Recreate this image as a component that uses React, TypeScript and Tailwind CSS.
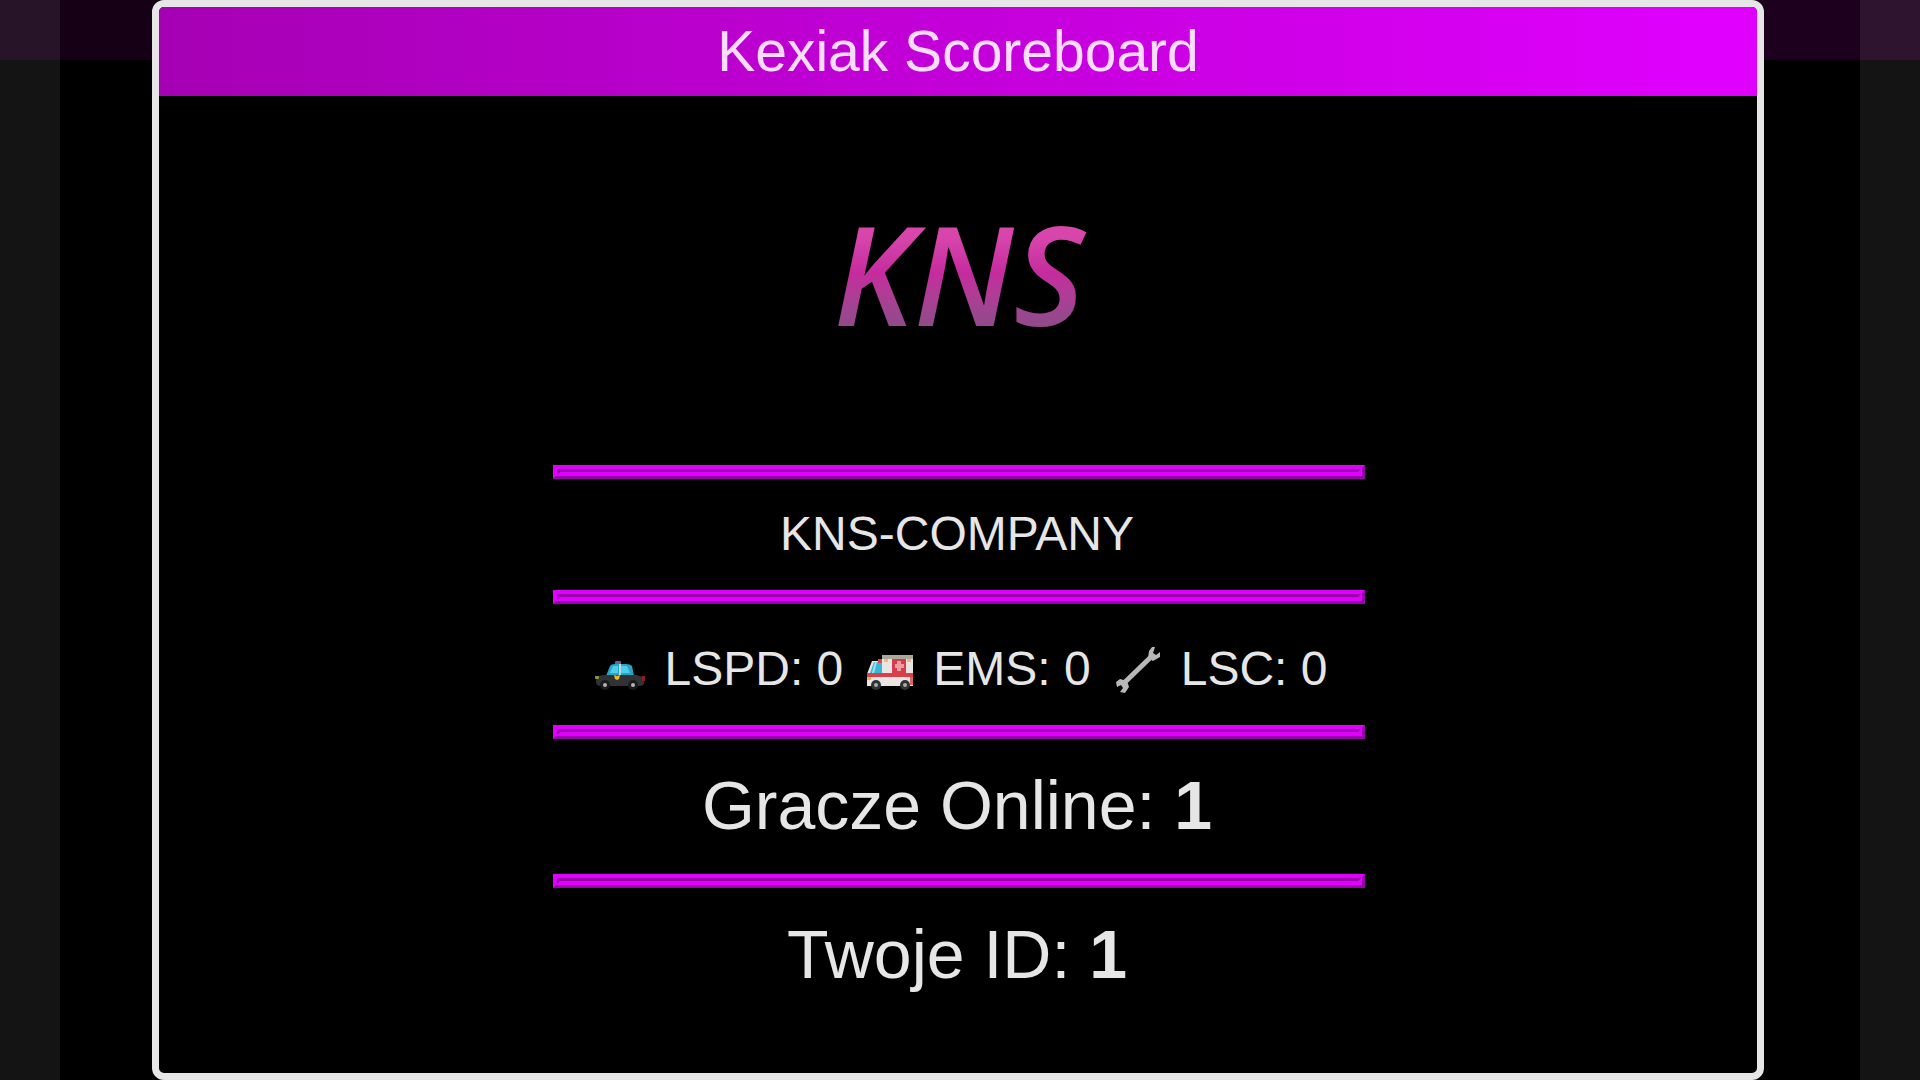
function PoliceCar() {
  return (
    <svg viewBox="0 0 50 32" className="mt-3 h-8 w-[50px]" aria-hidden="true">
      <rect x="20" y="2" width="6" height="4" rx="1" fill="#7d5a8c" />
      <path d="M11 17 15 7Q16 5 20 5H31Q35 5 37 7L39 17Z" fill="#27a5c4" />
      <path d="M15 14 18 7H23V14ZM26 7H32L35 14H26Z" fill="#4fcdea" />
      <path d="M24 5h2v12h-2z" fill="#b6d8df" />
      <path d="M1 19Q3 16 11 16H41Q48 17 49 20V25Q48 27 45 27H5Q1 26 1 23Z" fill="#303234" />
      <path d="M0 17h4v3H0z" fill="#7f8f3f" />
      <path d="M47 17h3v5h-3z" fill="#8b1d22" />
      <path d="m19 16 3 1 3-1-1 4-2 1-2-1Z" fill="#f5b922" />
      <circle cx="10" cy="26" r="5" fill="#191b1c" />
      <circle cx="38" cy="26" r="5" fill="#191b1c" />
      <circle cx="10" cy="26" r="2" fill="#b4b4b4" />
      <circle cx="38" cy="26" r="2" fill="#b4b4b4" />
    </svg>
  );
}

function Ambulance() {
  return (
    <svg viewBox="0 0 46 36" className="mt-2 h-9 w-[46px]" aria-hidden="true">
      <path d="M15 1H46V31H0V19L5 6H15Z" fill="#e8e5e2" />
      <path d="M15 0H46V4H15Z" fill="#aaa79d" />
      <path d="M3 18 7 7H15V18Z" fill="#35b7d8" />
      <path d="M8 7h2L7 18H5z" fill="#a6e1ee" />
      <path d="M11 4h4v4h-4z" fill="#d64852" />
      <path d="M17 4h4v3h-4zM40 4h4v3h-4z" fill="#efbd6b" />
      <path d="M25 4h14v14H25z" fill="#d43d4c" />
      <path d="M30 6h4v3h3v4h-3v3h-4v-3h-2V9h2z" fill="#ee9da1" />
      <path d="M0 18h46v4H0z" fill="#d93e4a" />
      <path d="M0 22h4v3H0z" fill="#f0b44e" />
      <path d="M43 22h3v8h-3z" fill="#d86767" />
      <circle cx="9" cy="30" r="5" fill="#303234" />
      <circle cx="38" cy="30" r="5" fill="#303234" />
      <circle cx="9" cy="30" r="2" fill="#aaa" />
      <circle cx="38" cy="30" r="2" fill="#aaa" />
    </svg>
  );
}

function Wrench() {
  return (
    <svg viewBox="0 0 46 48" className="h-12 w-[46px]" aria-hidden="true">
      <path d="M8 39 38 10" stroke="#b8b8b8" strokeWidth="5" />
      <path d="M37 2 34 6 33 13 38 16 45 12 45 7 41 10 38 8 40 2Z" fill="#b8b8b8" />
      <path d="M1 37 5 34 12 36 14 42 10 48 5 47 8 43 6 40 2 42Z" fill="#b8b8b8" />
    </svg>
  );
}

function Rule() {
  return <hr className="h-0 w-full border-[7px] border-[#e100ff] [border-style:ridge]" />;
}

const services = [
  { name: 'LSPD', count: 0, icon: <PoliceCar /> },
  { name: 'EMS', count: 0, icon: <Ambulance /> },
  { name: 'LSC', count: 0, icon: <Wrench /> },
];

export default function App() {
  return (
    <div className="relative flex h-screen bg-black pr-[156px] pl-[152px] font-['Liberation_Sans',Arial,sans-serif] text-[#e6e6e6]">
      {/* Dimmed page behind the panel */}
      <div className="absolute inset-x-0 top-0 h-[60px] bg-linear-to-r from-[#160016] to-[#1e001e]" />
      <div className="absolute inset-y-0 left-0 w-[60px] bg-white/8" />
      <div className="absolute inset-y-0 right-0 w-[60px] bg-white/8" />

      <main className="relative flex flex-1 flex-col overflow-hidden rounded-xl border-[7px] border-[#e6e6e6] bg-black">
        <header className="flex h-[89px] items-center justify-center bg-linear-to-r from-[#a600b4] to-[#e100ff] pb-0.5">
          <h1 className="text-[57px] leading-[64px] text-[#f9dcff]">Kexiak Scoreboard</h1>
        </header>

        <section className="mx-auto flex w-[51%] flex-col items-center pl-0.5 whitespace-nowrap">
          <div className="flex h-[369px] items-center pb-4">
            <span className="bg-linear-to-b from-[#d846ac] from-30% via-[#c52b9e] via-50% to-[#96488d] to-75% bg-clip-text px-2 font-['Open_Sans',sans-serif] text-[137px] leading-[184px] font-semibold text-transparent italic">
              KNS
            </span>
          </div>

          <Rule />
          <p className="flex h-[111px] items-center pr-1 pb-0.5 text-[48px] leading-[56px]">KNS-COMPANY</p>
          <Rule />
          <ul className="flex h-[121px] items-center gap-6 pt-2 pl-1 text-[48px] leading-[56px]">
            {services.map((service) => (
              <li key={service.name} className="flex items-center gap-5">
                {service.icon}
                <span>
                  {service.name}: {service.count}
                </span>
              </li>
            ))}
          </ul>
          <Rule />
          <p className="flex h-[135px] items-center pr-1 pb-1 text-[68px] leading-[76px] whitespace-pre">
            Gracze Online: <b>1</b>
          </p>
          <Rule />
          <p className="flex h-[135px] items-center pr-1 pb-1 text-[68px] leading-[76px] whitespace-pre">
            Twoje ID: <b>1</b>
          </p>
        </section>
      </main>
    </div>
  );
}
